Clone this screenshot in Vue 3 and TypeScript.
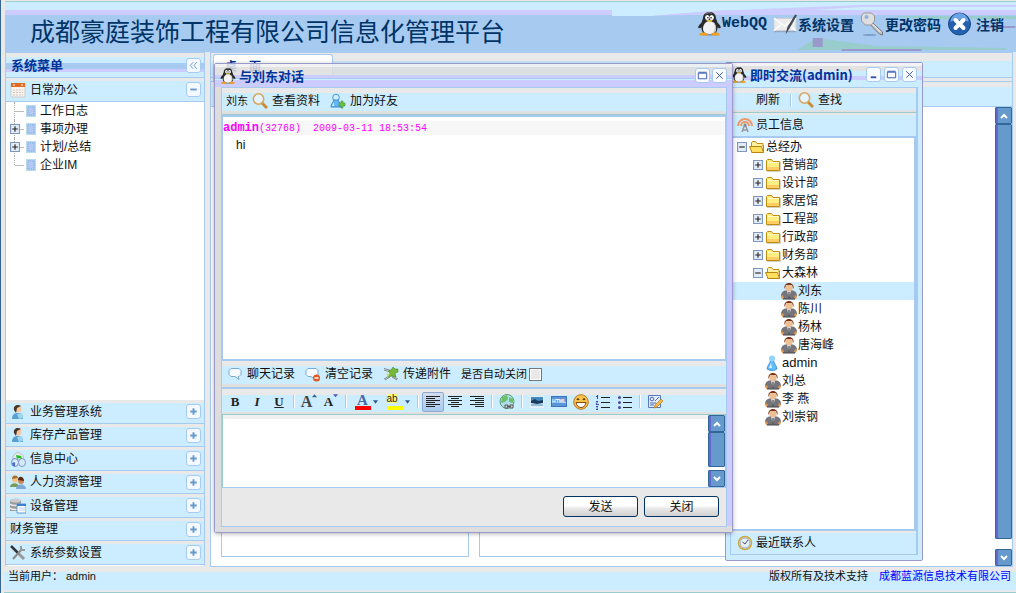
<script setup lang="ts">
import { ref } from 'vue'

interface MenuNode { label: string; expandable: boolean }
interface Group { label: string; icon: string }
interface TreeRow { label: string; level: number; icon: string; toggle?: 'plus' | 'minus'; selected?: boolean }
interface Tool { name: string; icon?: string; glyph?: string; wide?: boolean; pressed?: boolean; sep?: boolean }

const menu: MenuNode[] = [
  { label: '工作日志', expandable: false },
  { label: '事项办理', expandable: true },
  { label: '计划/总结', expandable: true },
  { label: '企业IM', expandable: false },
]

const groups: Group[] = [
  { label: '业务管理系统', icon: 'i-user' },
  { label: '库存产品管理', icon: 'i-user' },
  { label: '信息中心', icon: 'i-info' },
  { label: '人力资源管理', icon: 'i-people' },
  { label: '设备管理', icon: 'i-db' },
  { label: '财务管理', icon: '' },
  { label: '系统参数设置', icon: 'i-tools' },
]

const contacts: TreeRow[] = [
  { label: '总经办', level: 0, icon: 'i-open', toggle: 'minus' },
  { label: '营销部', level: 1, icon: 'i-folder', toggle: 'plus' },
  { label: '设计部', level: 1, icon: 'i-folder', toggle: 'plus' },
  { label: '家居馆', level: 1, icon: 'i-folder', toggle: 'plus' },
  { label: '工程部', level: 1, icon: 'i-folder', toggle: 'plus' },
  { label: '行政部', level: 1, icon: 'i-folder', toggle: 'plus' },
  { label: '财务部', level: 1, icon: 'i-folder', toggle: 'plus' },
  { label: '大森林', level: 1, icon: 'i-open', toggle: 'minus' },
  { label: '刘东', level: 2, icon: 'i-staff', selected: true },
  { label: '陈川', level: 2, icon: 'i-staff' },
  { label: '杨林', level: 2, icon: 'i-staff' },
  { label: '唐海峰', level: 2, icon: 'i-staff' },
  { label: 'admin', level: 1, icon: 'i-admin' },
  { label: '刘总', level: 1, icon: 'i-staff' },
  { label: '李 燕', level: 1, icon: 'i-staff' },
  { label: '刘崇钢', level: 1, icon: 'i-staff' },
]

const tools: Tool[] = [
  { name: 'bold', glyph: 'B' },
  { name: 'italic', glyph: 'I' },
  { name: 'underline', glyph: 'U' },
  { name: 's1', sep: true },
  { name: 'grow', glyph: 'A', icon: 'e-up' },
  { name: 'shrink', glyph: 'A', icon: 'e-down' },
  { name: 's2', sep: true },
  { name: 'color', glyph: 'A', icon: 'e-arrow', wide: true },
  { name: 'highlight', glyph: 'ab', icon: 'e-arrow', wide: true },
  { name: 's3', sep: true },
  { name: 'left', icon: 'e-left', pressed: true },
  { name: 'center', icon: 'e-center' },
  { name: 'right', icon: 'e-right' },
  { name: 's4', sep: true },
  { name: 'link', icon: 'e-link' },
  { name: 's5', sep: true },
  { name: 'image', icon: 'e-image' },
  { name: 'html', glyph: 'HTML' },
  { name: 'smiley', icon: 'e-smile' },
  { name: 'ordered', icon: 'e-ol' },
  { name: 'unordered', icon: 'e-ul' },
  { name: 's6', sep: true },
  { name: 'source', icon: 'e-edit' },
]

const autoClose = ref(false)
const draft = ref('')
</script>

<template>
  <div class="app">
    <svg class="defs" aria-hidden="true">
      <symbol id="i-penguin" viewBox="0 0 24 24">
        <ellipse cx="12" cy="22" rx="9" ry="1.6" fill="#7a8fae" />
        <path d="M5 10C2 12 0 15 1 16s4-1 5-3zM19 10c3 2 5 5 4 6s-4-1-5-3z" fill="#2a2a2a" />
        <path d="M12 0C8 0 5.500 2.500 5.500 6.500C3.500 10 2.500 19 7 22h10c4.500-3 3.500-12 1.500-15.500C18.500 2.500 16 0 12 0z" fill="#2a2a2a" />
        <path d="M12 9c-3 0-6.500 3-6.500 7.500S9 22 12 22s6.500-1 6.500-5.500S15 9 12 9z" fill="#f2f2f2" />
        <path d="M15 10c3 2 3 8 0 11 3 0 4-3 3.500-6S17 10 15 10z" fill="#c8c8c8" />
        <path d="M8 2c1-1.500 5-1.500 6-.5" stroke="#999" fill="none" />
        <ellipse cx="9.800" cy="5.500" rx="2.200" ry="2.600" fill="#fff" /><ellipse cx="14.200" cy="5.500" rx="2.200" ry="2.600" fill="#fff" />
        <circle cx="10.400" cy="5.800" r=".8" fill="#111" /><circle cx="13.600" cy="5.800" r=".8" fill="#111" />
        <path d="M8.500 8h7L12 10.500z" fill="#e8c040" />
        <path d="M2 22c1-2 7-2 8 0v1.500H2zM14 22c1-2 7-2 8 0v1.500h-8z" fill="#f0a020" />
      </symbol>
      <symbol id="i-mail" viewBox="0 0 26 24">
        <path d="M1 6h23v13H1z" fill="#ececec" stroke="#c4ccd4" /><path d="M1 19l8-7M24 19l-7-6M1 6l11 8L24 6" fill="none" stroke="#fff" stroke-width="1.400" />
        <path d="M1 20h23" stroke="#8fa0bc" /><path d="M23 2L15 15l-2 8 4-6L25 3z" fill="#444b58" />
      </symbol>
      <symbol id="i-key" viewBox="0 0 24 24">
        <ellipse cx="9" cy="23" rx="7" ry="1" fill="#7f9fc8" />
        <path d="M10 9l12 11v3l-3-1-11-11z" fill="#c4c4c4" stroke="#777" />
        <path d="M3 1h8l3 3v5l-3 4H5L1 9V4z" fill="#dedede" stroke="#999" /><circle cx="6" cy="5" r="2" fill="#8fb2dc" />
        <path d="M12 12l8 8" stroke="#fff" />
      </symbol>
      <symbol id="i-exit" viewBox="0 0 24 24">
        <circle cx="12" cy="12" r="11" fill="#2460b0" stroke="#1c4888" /><path d="M3 10a9 9 0 0 1 18 0c-5-3-13-3-18 0z" fill="#6ba4e4" />
        <path d="M8 8l8 8M16 8l-8 8" stroke="#fff" stroke-width="4" stroke-linecap="round" />
      </symbol>
      <symbol id="i-calendar" viewBox="0 0 16 16">
        <path d="M1 2h14v13H1z" fill="#f7f4f0" stroke="#ccc" /><path d="M1 1h14v4H1z" fill="#e06a20" /><path d="M4 2v2M12 2v2" stroke="#fff" />
        <path d="M3 8h10M3 10.500h10M3 13h10" stroke="#d9c6b8" stroke-dasharray="2 1" />
      </symbol>
      <symbol id="i-leaf" viewBox="0 0 12 12">
        <path d="M1 0h10v12H1z" fill="#b8dcec" /><path d="M2 1h8v10H2z" fill="#a6caf0" /><path d="M3 2h6v8H3z" fill="#b4c8f4" stroke="#88aee4" stroke-dasharray="1 1" />
      </symbol>
      <symbol id="i-user" viewBox="0 0 16 16">
        <path d="M2 15c0-4 2-6 6-6s5 2 5 6z" fill="#5b9fd0" /><path d="M7 10l5-1 1 5-4 1z" fill="#9fd6ef" />
        <circle cx="8" cy="5" r="3.500" fill="#f1c8a0" /><path d="M4 6C3 1 8 0 11 2L7 4l-1 5z" fill="#4a3526" />
      </symbol>
      <symbol id="i-info" viewBox="0 0 16 16">
        <path d="M3 5l4-4 6 3 1 5H3z" fill="#e8e8e8" stroke="#aaa" stroke-width=".6" />
        <ellipse cx="5" cy="11.500" rx="3.500" ry="4" fill="#e0ecfa" stroke="#6a8cc8" /><ellipse cx="12" cy="11.500" rx="3.500" ry="4" fill="#d8e8fa" stroke="#7a9cc8" />
        <path d="M6 4l5 1 1 3-3-1-2 1z" fill="#1cc020" /><path d="M2 12l3-1v4H3z" fill="#4468d0" />
      </symbol>
      <symbol id="i-people" viewBox="0 0 16 16">
        <path d="M0 13c0-5 9-5 9 0z" fill="#7a9a58" /><path d="M6 15c0-6 10-6 10 0z" fill="#7fa8d8" />
        <circle cx="5" cy="5.500" r="3" fill="#ecc48c" /><path d="M2 5c0-5 6-4 6-1z" fill="#b06c24" /><circle cx="11" cy="7" r="3" fill="#c88858" /><path d="M8 6c0-5 6-4 6 1z" fill="#5c2c14" />
      </symbol>
      <symbol id="i-db" viewBox="0 0 16 16">
        <path d="M0 2h11v11H0z" fill="#999" /><ellipse cx="5.500" cy="2.500" rx="5.500" ry="2" fill="#ccc" /><path d="M0 6c2 2 9 2 11 0M0 10c2 2 9 2 11 0" fill="none" stroke="#eee" stroke-width="1.500" />
        <path d="M7 6h9v9H7z" fill="#fff" stroke="#5c98d8" /><path d="M7 6h9v2H7z" fill="#3c80d0" /><path d="M9 10h6M9 12h6" stroke="#b8cce8" />
      </symbol>
      <symbol id="i-tools" viewBox="0 0 16 16">
        <path d="M1 1l7 7" stroke="#333" stroke-width="2.500" /><path d="M8 8l6 6" stroke="#999" stroke-width="3" /><path d="M12 4L3 14" stroke="#888" stroke-width="2" /><path d="M11 1v4h4" fill="none" stroke="#999" stroke-width="2" />
      </symbol>
      <symbol id="i-search" viewBox="0 0 16 16">
        <path d="M10 10l5 5" stroke="#c88c38" stroke-width="3" /><circle cx="6.500" cy="6" r="5.200" fill="#e4f4ff" stroke="#d8a860" stroke-width="1.600" />
      </symbol>
      <symbol id="i-add" viewBox="0 0 16 16">
        <circle cx="6" cy="4.500" r="3.300" fill="#d4efff" stroke="#3c98d8" /><path d="M1 14c0-3 2-4 3-7h4c1 3 3 4 3 7z" fill="#64b8f4" stroke="#3c88c8" /><path d="M4 9l-2 4h2z" fill="#dff4ff" /><path d="M9 10h2V8h2v2h2v3h-2v2h-2v-2H9z" fill="#68c048" stroke="#388820" stroke-width=".5" />
      </symbol>
      <symbol id="i-signal" viewBox="0 0 16 16">
        <path d="M1 9a7 7 0 1 1 14 0M4 9a4 4 0 1 1 8 0" fill="none" stroke="#f09868" stroke-width="2" /><path d="M8 7l-3 8M8 7l3 8M6 13h4" stroke="#999" stroke-width="1.500" /><circle cx="8" cy="8" r="1.500" fill="#888" />
      </symbol>
      <symbol id="i-clock" viewBox="0 0 16 16">
        <circle cx="8" cy="8" r="6.500" fill="#e8eef8" stroke="#d0a840" stroke-width="1.500" /><circle cx="8" cy="8" r="5" fill="none" stroke="#9ab" /><path d="M8 9l3-4M8 9L5.500 7" stroke="#456" />
      </symbol>
      <symbol id="i-folder" viewBox="0 0 16 16">
        <path d="M2 14.500h13.500V5" fill="none" stroke="#b8b0a0" opacity=".6" /><path d="M1.500 13.500v-10l1-1h4l1.500 2h6.500v9z" fill="#ffee80" stroke="#c08c10" /><path d="M2 10h12v3H2z" fill="#ffcc66" /><path d="M2.500 5.500H14" stroke="#fff8c8" />
      </symbol>
      <symbol id="i-open" viewBox="0 0 16 16">
        <path d="M2.500 13.500v-10l1-1h3l1.500 2h6v3" fill="#fff0a0" stroke="#c08c10" /><path d="M.5 7.500h12l2 6H3z" fill="#ffdf60" stroke="#b88410" /><path d="M14.500 6v7.500" stroke="#c08c10" />
      </symbol>
      <symbol id="i-staff" viewBox="0 0 16 18">
        <path d="M0 14c0-4 3-6 8-6s8 2 8 6l-2 3H2z" fill="#74747c" /><path d="M0 14l2-1 1 3-2 1zM16 14l-2-1-1 3 2 1z" fill="#e09850" />
        <path d="M6 9h4l-2 7z" fill="#ddd" /><path d="M8 10v6" stroke="#333" /><circle cx="8" cy="5.500" r="3.800" fill="#eac094" /><path d="M3.500 7C2-1 14-1 12.500 7L11 3H5z" fill="#7c3418" /><path d="M2 17h12" stroke="#444" />
      </symbol>
      <symbol id="i-admin" viewBox="0 0 16 16">
        <path d="M5.500 5c0 3-3.500 6-3.500 9 3 2 7 2 10 0 0-3-3.500-6-3.500-9z" fill="#66bdf6" stroke="#3088d8" stroke-width=".8" /><circle cx="7" cy="3.500" r="3" fill="#8fd4fc" /><path d="M6 8l-2 5h3z" fill="#d8f2ff" />
      </symbol>
      <symbol id="i-chat" viewBox="0 0 16 16">
        <path d="M4 2.500h8l2 2v4l-2 2h-1l1 3-4-3H4l-2-2v-4z" fill="#f4faff" stroke="#7ca8cc" />
      </symbol>
      <symbol id="i-clear" viewBox="0 0 16 16">
        <path d="M3 2.500h8l2 2v4l-2 2H9l1 3-4-3H3l-2-2v-4z" fill="#f4faff" stroke="#7ca8cc" /><circle cx="11.500" cy="12" r="3.500" fill="#e05820" /><path d="M9.500 12h4" stroke="#fff" stroke-width="1.500" />
      </symbol>
      <symbol id="i-send" viewBox="0 0 16 16">
        <path d="M1 2.500l7 2M1 4l6 2M1 13l5-3M2 14l5-3M9 10l6 3M9 11l5 3" stroke="#888" /><path d="M8 4l2-3 2 2h3v3l-3 1 1 4-4-1-4 1 2-4-2-2z" fill="#78b838" stroke="#508820" stroke-width=".6" /><path d="M3 8l4-1-2 4z" fill="#c8dc88" />
      </symbol>

      <symbol id="e-up" viewBox="0 0 6 4"><path d="M0 3.500L3 0l3 3.500z" fill="#3c5c9c" /></symbol>
      <symbol id="e-down" viewBox="0 0 6 4"><path d="M0 0h6L3 3.500z" fill="#4a5cb0" /></symbol>
      <symbol id="e-arrow" viewBox="0 0 6 4"><path d="M0 0h6L3 4z" fill="#2c5a94" /></symbol>
      <symbol id="e-left" viewBox="0 0 16 16"><path d="M1 2.500h14M1 4.500h9M1 6.500h14M1 8.500h9M1 10.500h14M1 12.500h9" stroke="#222" /></symbol>
      <symbol id="e-center" viewBox="0 0 16 16"><path d="M1 2.500h14M4 4.500h8M1 6.500h14M4 8.500h8M1 10.500h14M4 12.500h8" stroke="#222" /></symbol>
      <symbol id="e-right" viewBox="0 0 16 16"><path d="M1 2.500h14M6 4.500h9M1 6.500h14M6 8.500h9M1 10.500h14M6 12.500h9" stroke="#222" /></symbol>
      <symbol id="e-link" viewBox="0 0 16 16"><circle cx="8" cy="7.500" r="7" fill="#b0dcec" stroke="#58a070" /><path d="M3 3l5-2 1 4-3 3-4 1zM10 3l4 2v4l-4-1z" fill="#6cc06c" /><path d="M6 11h3v3H6zM11 11h3v3h-3z" fill="#ddd" stroke="#555" /><path d="M8 12.500h4" stroke="#555" /></symbol>
      <symbol id="e-image" viewBox="0 0 16 16"><path d="M1 2h14v12H1z" fill="#e4f0fc" /><path d="M2 3h12v5H2z" fill="#4488c0" /><path d="M2 7l4-2 3 2 5-1v3l-6 1-6-1z" fill="#183c60" /><path d="M2 10h12v2H2z" fill="#90bce0" /></symbol>
      <symbol id="e-smile" viewBox="0 0 16 16"><circle cx="8" cy="8" r="7.300" fill="#fcc44c" stroke="#b87820" /><path d="M4 6q1-2 2 0M10 6q1-2 2 0" fill="none" stroke="#64380c" stroke-width="1.300" /><path d="M3 8.500h10q-1 5-5 5t-5-5z" fill="#fff" stroke="#84480c" /></symbol>
      <symbol id="e-ol" viewBox="0 0 16 16"><path d="M6 3.500h9M6 8.500h9M6 13.500h9" stroke="#222" /><path d="M1 2.500h1M2.500 1v4M1 7.500h2M2.500 8L1 10M1 10.500h3M1 12.500h2M1.500 14h1.500M1 15.500h2" fill="none" stroke="#4444b0" /></symbol>
      <symbol id="e-ul" viewBox="0 0 16 16"><path d="M6 3.500h9M6 8.500h9M6 13.500h9" stroke="#222" /><circle cx="2.500" cy="3.500" r="1.500" fill="#4c4c9c" /><circle cx="2.500" cy="8.500" r="1.500" fill="#4c4c9c" /><circle cx="2.500" cy="13.500" r="1.500" fill="#4c4c9c" /></symbol>
      <symbol id="e-edit" viewBox="0 0 16 16"><path d="M1.500 1.500h12v12h-12z" fill="#e4ecff" stroke="#5878c0" /><circle cx="5" cy="5" r="1.800" fill="none" stroke="#4868b8" /><path d="M8 7l4-4M3 9h6M3 11h4" stroke="#4868b8" /><path d="M7 14l1-3 6-6 2 2-6 6z" fill="#f8b848" stroke="#b07820" stroke-width=".7" /></symbol>
    </svg>

    <header class="banner">
      <svg class="haze" viewBox="0 0 405 50" preserveAspectRatio="none" aria-hidden="true">
        <path d="M0 0h405v3H250L100 9 40 14H0z" fill="#ccecff" />
        <path d="M40 14l60-5 150-6h155v2H250L150 11z" fill="#ccccff" />
        <path d="M280 14h125v3H310zM195 42l10-6 60 8 130 2v2H185z" fill="#99cccc" />
        <path d="M201 36h10v9h-10zM230 47h80v2h-80zM370 24h34v2h-30z" fill="#9999cc" />
      </svg>
      <h1>成都豪庭装饰工程有限公司信息化管理平台</h1>
      <nav class="links">
        <a href="#"><svg class="big"><use href="#i-penguin" /></svg><span class="mono">WebQQ</span></a>
        <a href="#"><svg class="big"><use href="#i-mail" /></svg><span>系统设置</span></a>
        <a href="#"><svg class="big"><use href="#i-key" /></svg><span>更改密码</span></a>
        <a href="#"><svg class="big"><use href="#i-exit" /></svg><span class="last">注销</span></a>
      </nav>
    </header>

    <div class="body">
      <aside class="sidebar">
        <div class="side-title">
          <h2>系统菜单</h2>
          <button class="tool" aria-label="折叠">
            <svg viewBox="0 0 14 14"><path d="M6.500 3.500L3.500 7l3 3.500M10.500 3.500L7.500 7l3 3.500" /></svg>
          </button>
        </div>
        <div class="group">
          <svg class="ic"><use href="#i-calendar" /></svg>
          <span>日常办公</span>
          <button class="tool" aria-label="收起"><svg viewBox="0 0 14 14"><path d="M3.500 7h7" stroke-width="2" /></svg></button>
        </div>
        <ul class="menu">
          <li v-for="m in menu" :key="m.label">
            <i class="branch"><svg v-if="m.expandable" class="toggle" viewBox="0 0 9 9"><path d="M.5.5h8v8h-8z" fill="#e4ecf8" stroke="#7c98c0" /><path d="M2 4.500h5M4.500 2v5" stroke="#222" /></svg></i>
            <svg class="leaf"><use href="#i-leaf" /></svg>
            <a href="#">{{ m.label }}</a>
          </li>
        </ul>
        <div class="groups">
          <div v-for="g in groups" :key="g.label" class="group">
            <svg v-if="g.icon" class="ic"><use :href="'#' + g.icon" /></svg>
            <span>{{ g.label }}</span>
            <button class="tool" :aria-label="'展开' + g.label"><svg viewBox="0 0 14 14"><path d="M3.500 7h7M7 3.500v7" stroke-width="2" /></svg></button>
          </div>
        </div>
      </aside>

      <main class="main">
        <div class="tabs"><button class="tab">桌　面</button></div>
        <div class="strip"></div>
        <div class="content">
          <div class="portlets"><div class="portlet"></div><div class="portlet"></div></div>
          <div class="scroll">
            <button aria-label="向上"><svg viewBox="0 0 8 6"><path d="M1 5l3-3 3 3" /></svg></button>
            <div class="thumb"></div>
            <button aria-label="向下"><svg viewBox="0 0 8 6"><path d="M1 1l3 3 3-3" /></svg></button>
          </div>
        </div>
      </main>
    </div>

    <footer class="status">
      <span>当前用户：</span><span class="who">admin</span>
      <span class="rights">版权所有及技术支持</span><a href="#">成都蓝源信息技术有限公司</a>
    </footer>

    <section class="win im">
      <div class="win-title">
        <svg class="ic"><use href="#i-penguin" /></svg>
        <h2>即时交流(admin)</h2>
        <button class="tool" aria-label="最小化"><svg viewBox="0 0 14 14"><path d="M4 10h6" stroke-width="2" /></svg></button>
        <button class="tool" aria-label="最大化"><svg viewBox="0 0 14 14"><path d="M2.500 4.500h9v6h-9zM2.500 3.500h9" /></svg></button>
        <button class="tool" aria-label="关闭窗口"><svg viewBox="0 0 14 14"><path d="M3.500 3.500l7 7M10.500 3.500l-7 7" /></svg></button>
      </div>
      <div class="im-body">
        <div class="bar im-bar">
          <button>刷新</button><i class="sep"></i>
          <button><svg class="ic"><use href="#i-search" /></svg>查找</button>
        </div>
        <div class="im-group"><svg class="ic"><use href="#i-signal" /></svg>员工信息</div>
        <ul class="tree">
          <li v-for="c in contacts" :key="c.label" :class="['level' + c.level, { selected: c.selected }]">
            <svg v-if="c.toggle" class="toggle" viewBox="0 0 9 9"><path d="M.5.5h8v8h-8z" fill="#e4ecf8" stroke="#7c98c0" /><path :d="c.toggle === 'plus' ? 'M2 4.500h5M4.500 2v5' : 'M2 4.500h5'" stroke="#222" /></svg>
            <i v-else class="toggle"></i>
            <svg class="node"><use :href="'#' + c.icon" /></svg>
            <span :class="{ latin: c.label === 'admin' }">{{ c.label }}</span>
          </li>
        </ul>
        <div class="im-group recent"><svg class="ic"><use href="#i-clock" /></svg>最近联系人</div>
      </div>
    </section>

    <section class="win talk">
      <div class="win-title">
        <svg class="ic"><use href="#i-penguin" /></svg>
        <h2>与刘东对话</h2>
        <button class="tool" aria-label="最大化"><svg viewBox="0 0 14 14"><path d="M2.500 4.500h9v6h-9zM2.500 3.500h9" /></svg></button>
        <button class="tool" aria-label="关闭窗口"><svg viewBox="0 0 14 14"><path d="M3.500 3.500l7 7M10.500 3.500l-7 7" /></svg></button>
      </div>
      <div class="talk-body">
        <div class="bar talk-bar">
          <span class="small">刘东</span>
          <button><svg class="ic"><use href="#i-search" /></svg>查看资料</button>
          <button><svg class="ic"><use href="#i-add" /></svg>加为好友</button>
        </div>
        <div class="log">
          <p class="meta"><b>admin</b>(32768)&nbsp; <time>2009-03-11 18:53:54</time></p>
          <p class="said">hi</p>
        </div>
        <div class="bar action-bar">
          <button><svg class="ic"><use href="#i-chat" /></svg>聊天记录</button>
          <button><svg class="ic"><use href="#i-clear" /></svg>清空记录</button>
          <button><svg class="ic"><use href="#i-send" /></svg>传递附件</button>
          <label class="small" for="auto-close">是否自动关闭</label><input id="auto-close" v-model="autoClose" type="checkbox">
        </div>
        <div class="editor-bar">
          <template v-for="t in tools" :key="t.name">
            <i v-if="t.sep" class="sep"></i>
            <button v-else :class="[t.name, { wide: t.wide, pressed: t.pressed }]" :aria-label="t.name">
              <span v-if="t.glyph" class="glyph">{{ t.glyph }}</span>
              <svg v-if="t.icon" :class="{ mark: t.glyph }"><use :href="'#' + t.icon" /></svg>
            </button>
          </template>
        </div>
        <div class="editor">
          <textarea v-model="draft" aria-label="消息"></textarea>
          <div class="scroll">
            <button aria-label="向上"><svg viewBox="0 0 8 6"><path d="M1 5l3-3 3 3" /></svg></button>
            <div class="thumb"></div>
            <button aria-label="向下"><svg viewBox="0 0 8 6"><path d="M1 1l3 3 3-3" /></svg></button>
          </div>
        </div>
        <div class="buttons"><button>发送</button><button>关闭</button></div>
      </div>
    </section>
  </div>
</template>

<style>
html, body { margin: 0; background: #e9e9e9; }
</style>

<style scoped>
* { box-sizing: border-box; }
.app {
  position: relative; display: flex; flex-direction: column; min-height: 100vh; overflow: hidden;
  padding: 1px 0 0 4px; border-left: 1px solid #336699; background: #e9e9e9;
  font: 12px/18px "Liberation Sans", "Noto Sans CJK SC", sans-serif; color: #111;
}
.defs { position: absolute; width: 0; height: 0; }
button { margin: 0; padding: 0; border: 0; background: none; font: inherit; color: inherit; cursor: pointer; }
h1, h2, p, ul { margin: 0; padding: 0; }
ul { list-style: none; }
h2 { font: 700 13px/18px "Noto Sans CJK SC", sans-serif; color: #003399; white-space: nowrap; }
a { color: inherit; text-decoration: none; }
.ic { flex: none; width: 16px; height: 16px; }

.banner {
  position: relative; display: flex; align-items: center; justify-content: space-between; height: 51px; padding: 6px 12px 0 25px;
  border-top: 1px solid #99cccc;
  background: linear-gradient(#ccecff 0 8px, #ccccff 8px 13px, #a6caf0 13px);
}
.haze { position: absolute; top: 0; right: 0; width: 40%; height: 50px; }
h1 { position: relative; font: 400 25px/36px "Noto Sans CJK SC", sans-serif; color: #003366; white-space: nowrap; }
.links { position: relative; display: flex; gap: 6px; padding-bottom: 12px; font: 700 14px/24px "Noto Sans CJK SC", sans-serif; color: #003366; white-space: nowrap; }
.links a { display: flex; align-items: center; }
.mono { font: 700 15px/24px "Liberation Mono", monospace; }
.last { padding-left: 4px; }
.big { width: 25px; height: 24px; }

.body { display: flex; flex: 1; gap: 5px; padding-right: 3px; }
.sidebar { display: flex; flex-direction: column; width: 200px; flex: none; border: 1px solid #a6caf0; border-bottom: 0; background: #fff; margin-bottom: 1px; }
.side-title {
  display: flex; align-items: center; justify-content: space-between; height: 25px; padding: 0 3px 0 5px; border-bottom: 1px solid #a6caf0;
  background: linear-gradient(#e9e9e9 0 4px, #ccecff 4px 10px, #a6caf0 10px 16px, #ccccff 16px 19px, #ccecff 19px);
}
.tool { flex: none; width: 15px; height: 15px; border: 1px solid #a6caf0; border-radius: 3px; background: #f4f9ff; }
.tool svg { display: block; width: 13px; height: 13px; fill: none; stroke: #6699cc; }
.group { display: flex; align-items: center; gap: 4px; height: 24px; padding: 0 3px 0 4px; border-bottom: 1px solid #a6caf0; background: linear-gradient(#e9e9e9 0 3px, #ccecff 3px); }
.group span { flex: 1; }
.menu { flex: 1; padding: 0 0 0 4px; }
.menu li { display: flex; align-items: center; height: 18px; }
.branch { position: relative; width: 15px; height: 18px; background: linear-gradient(#bbb, #bbb) 5px 9px / 9px 1px no-repeat; }
.branch::before { content: ""; position: absolute; left: 4px; top: 0; bottom: 0; border-left: 1px dotted #aaa; }
.menu li:last-child .branch::before { bottom: 9px; }
.branch .toggle { position: absolute; left: 0; top: 4px; }
.toggle { flex: none; width: 10px; height: 10px; }
.leaf { width: 12px; height: 12px; margin-right: 3px; }
.groups { padding-bottom: 1px; }
.groups .group:nth-child(even) { height: 23px; }

.main { display: flex; flex: 1; flex-direction: column; min-width: 0; border: 1px solid #a6caf0; }
.tabs { display: flex; align-items: flex-end; height: 29px; padding: 1px 2px 0; border-bottom: 1px solid #a6caf0; background: linear-gradient(#e9e9e9 0 8px, #ccecff 8px 24px, #a6caf0 24px 25px, #e9e9e9 25px); }
.tab { align-self: stretch; width: 120px; border: 1px solid #a6caf0; border-bottom: 0; border-radius: 3px 3px 0 0; background: #fff; color: #003399; font: 700 12px/18px "Noto Sans CJK SC", sans-serif; padding: 0 60px 5px 0; white-space: nowrap; }
.strip { height: 25px; border-bottom: 1px solid #a6caf0; background: linear-gradient(#e9e9e9 0 5px, #ccecff 5px); }
.content { display: flex; flex: 1; background: #fff; }
.portlets { display: grid; flex: 1; grid-template-columns: 248px 248px; gap: 10px; padding: 8px 10px 9px; }
.portlet { border: 1px solid #a6caf0; }
.scroll { display: flex; flex-direction: column; flex: none; width: 17px; background: #fff; }
.scroll button, .thumb { border: 1px solid #336699; border-radius: 1px; background: linear-gradient(to right, #6666cc 0 2px, #6699cc 2px); }
.scroll button { display: grid; place-items: center; height: 17px; }
.scroll svg { width: 8px; height: 6px; fill: none; stroke: #fff; stroke-width: 2; }
.thumb { flex: 1; margin-bottom: 10px; }

.status { display: flex; align-items: center; height: 26px; margin-left: -1px; padding: 0 5px 7px 4px; border-bottom: 1px solid #99cccc; background: linear-gradient(#e9e9e9 0 5px, #ccecff 5px 23px, #e9e9e9 23px); font-size: 11px; white-space: nowrap; }
.who { padding-left: 3px; }
.rights { margin-left: auto; padding-right: 11px; }
.status a { color: #00f; }

.win { position: absolute; z-index: 1; display: flex; flex-direction: column; border: 1px solid #9999cc; border-radius: 2px; }
.win-title { display: flex; align-items: center; gap: 3px; height: 23px; padding: 0 5px; }
.win-title h2 { flex: 1; }
.win-title .tool { background: #f8fbff; }
.win-title .tool svg { stroke: #3355aa; }
.bar { display: flex; align-items: center; white-space: nowrap; background: linear-gradient(#e9e9e9 0 5px, #ccecff 5px 22px, #e0e0e0 22px); }
.bar button { display: flex; align-items: center; }
.small { font-size: 11px; }
.sep { width: 2px; height: 13px; border-left: 1px solid #a6caf0; border-right: 1px solid #fff; }

.im { left: 724px; top: 62px; width: 198px; height: 499px; padding: 0 4px 5px; background: #ccecff; }
.im .win-title { margin: 0 -4px; background: linear-gradient(#f3f3f3 0 3px, #e2e2e2 3px 8px, #ccecff 8px 13px, #ccccff 13px 17px, #ccecff 17px); }
.im-body { display: flex; flex: 1; flex-direction: column; margin-top: 1px; border: 1px solid #a6caf0; border-right-width: 2px; background: #ccecff; }
.im-bar { height: 25px; padding-left: 25px; border-bottom: 1px solid #99cccc; }
.im-bar .sep { margin: 0 6px 0 10px; }
.im-bar .ic { margin-right: 4px; }
.im-group { display: flex; align-items: center; gap: 3px; height: 25px; padding-left: 6px; border-bottom: 2px solid #a6caf0; background: linear-gradient(#e9e9e9 0 2px, #ccecff 2px); }
.tree { flex: 1; background: #fff; border-right: 2px solid #a6caf0; }
.tree li { display: flex; align-items: center; height: 18px; white-space: pre; }
.tree .selected { background: #ccecff; }
.tree .toggle { margin-right: 2px; }
.node { flex: none; width: 16px; height: 18px; margin-right: 1px; }
.level0 { padding-left: 6px; }
.level1 { padding-left: 22px; }
.level2 { padding-left: 38px; }
.latin { font-size: 13px; }
.recent { border-top: 2px solid #a6caf0; border-bottom: 0; }

.talk { left: 213px; top: 63px; width: 519px; height: 470px; padding: 0 5px 5px 6px; box-shadow: 0 1px 4px rgba(0, 0, 0, .3); }
.talk::before { content: ""; position: absolute; z-index: -1; inset: 23px 0 0; background: linear-gradient(#dddddd, #dddddd) bottom / 100% 6px no-repeat, linear-gradient(to right, #dddddd 0 50%, #ccccff 50%); }
.talk .win-title { margin: 0 -5px 0 -6px; background: linear-gradient(rgba(240, 240, 240, .85) 0 3px, rgba(221, 221, 221, .85) 3px 11px, #ccccff 11px 14px, #a6caf0 14px 15px, #ccecff 15px 16px, #ccccff 16px); }
.talk .win-title .tool:last-child { margin-left: -1px; }
.talk-body { display: flex; flex: 1; flex-direction: column; border: 1px solid #a6caf0; background: #e9e9e9; }
.talk-bar { height: 27px; gap: 4px; padding-left: 4px; border-bottom: 1px solid #99cccc; background: linear-gradient(#e9e9e9 0 5px, #ccecff 5px 23px, #e0e0e0 23px); }
.talk-bar button { gap: 4px; margin-right: 6px; }
.log { flex: 1; padding-top: 4px; border: solid #a6caf0; border-width: 2px 1px 2px 1px; background: #fff; }
.meta { height: 14px; background: #f7f7f7; color: #f0f; font: 10px/14px "Liberation Mono", monospace; white-space: nowrap; }
.meta b { font-size: 12px; }
.said { padding: 1px 0 0 13px; }
.action-bar { height: 26px; padding-left: 5px; gap: 8px; background: linear-gradient(#e9e9e9 0 5px, #ccecff 5px 23px, #e0e0e0 23px); }
.action-bar button { gap: 4px; margin-right: 2px; }
.action-bar input { appearance: none; width: 13px; height: 13px; margin: 0 0 0 -6px; border: 1px solid #777; background: #e9e9e9; box-shadow: inset 0 0 0 1px #fff; }
.editor-bar { display: flex; align-items: center; height: 28px; padding-left: 2px; border-top: 2px solid #a6caf0; border-bottom: 1px solid #99cccc; background: linear-gradient(#e9e9e9 0 6px, #ccecff 6px 23px, #e0e0e0 23px); }
.editor-bar button { display: flex; align-items: center; justify-content: center; width: 22px; height: 20px; border: 1px solid transparent; border-radius: 2px; }
.editor-bar svg { flex: none; width: 16px; height: 16px; }
.editor-bar .mark { width: 5px; height: 4px; }
.grow .mark, .shrink .mark { align-self: flex-start; margin-top: 1px; }
.editor-bar .wide { width: 32px; gap: 2px; }
.editor-bar .pressed { border-color: #8fa8d0; background: linear-gradient(#d4dcf0, #a6caf0); }
.editor-bar .sep { margin: 0 3px; }
.glyph { font: 700 13px/16px "Liberation Serif", serif; color: #222; }
.italic .glyph { font-style: italic; }
.underline .glyph { text-decoration: underline; }
.grow .glyph { font-size: 16px; color: #444; }
.color .glyph, .highlight .glyph { width: 16px; height: 16px; border-bottom: 4px solid #f00; font-size: 15px; line-height: 12px; color: #4668a8; text-align: center; }
.highlight .glyph { border-color: #ff0; background: linear-gradient(#ffff70, #ffff70) 0 0 / 10px 9px no-repeat; font: 10px/10px "Liberation Sans", sans-serif; color: #222; text-align: left; }
.html .glyph { width: 16px; height: 11px; border: 1px solid #3c74c0; background: #5c94d8; font: 700 5px/9px "Liberation Sans", sans-serif; color: #fff; text-align: center; }
.editor { display: flex; height: 73px; border-left: 1px solid #99cccc; border-right: 1px solid #99cccc; border-bottom: 1px solid #a6caf0; background: #fff; }
.editor textarea { flex: 1; min-width: 0; border: 0; outline: 0; resize: none; overflow: hidden; background: linear-gradient(#f0f0f0 0 4px, #fff 4px); font: inherit; }
.editor .thumb { margin-bottom: 3px; }
.buttons { display: flex; justify-content: flex-end; gap: 6px; padding: 8px 7px 9px; }
.buttons button { width: 75px; height: 21px; border: 1px solid #003366; border-radius: 3px; background: linear-gradient(#fff 0 45%, #e9e9e9 60%, #d0d0d0); line-height: 18px; }
</style>
